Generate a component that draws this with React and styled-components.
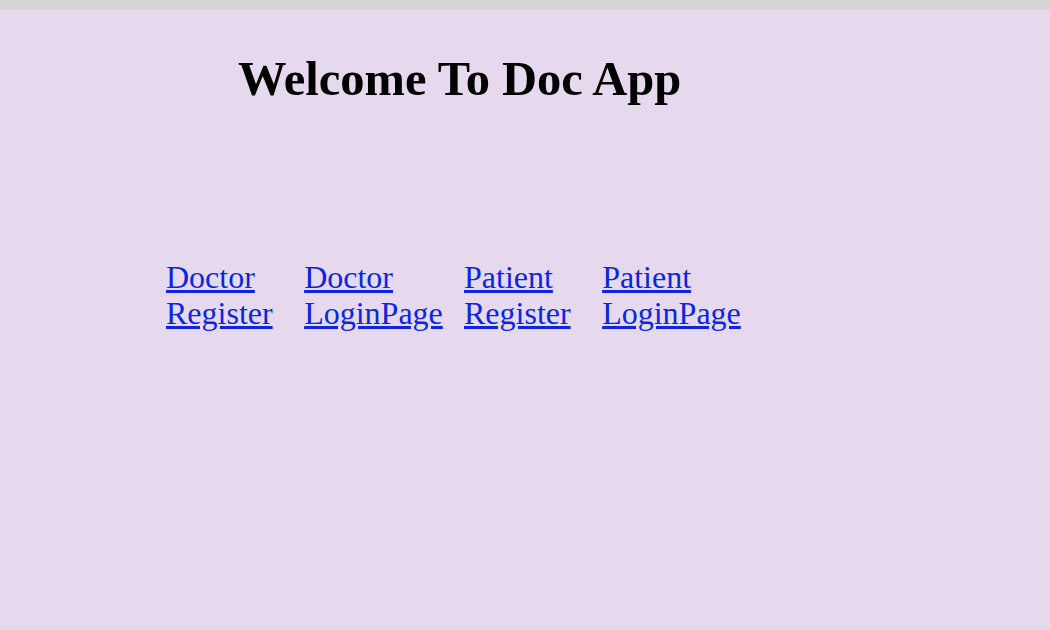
import React from "react";
import styled, { createGlobalStyle } from "styled-components";

const GlobalStyle = createGlobalStyle`
  html, body {
    margin: 0;
    padding: 0;
    background: #e6d9ee;
  }
`;

const TopBar = styled.div`
  height: 10px;
  background: #d6d6d6;
`;

const Page = styled.div`
  min-height: 620px;
  background: #e6d9ee;
  font-family: "Liberation Serif", "Times New Roman", serif;
  overflow: hidden;
`;

const Title = styled.h1`
  margin: 41px 0 0 238px;
  font-size: 48.5px;
  font-weight: bold;
  color: #000;
`;

const LinkRow = styled.nav`
  display: flex;
  width: 596px;
  margin: 153px 0 0 166px;
`;

const LinkEl = styled.a`
  flex: 1 1 auto;
  font-size: 32px;
  line-height: 36px;
  color: #0a26e2;
  text-decoration: underline;
`;

const links = [
  "Doctor Register",
  "Doctor LoginPage",
  "Patient Register",
  "Patient LoginPage",
];

export default function App() {
  return (
    <>
      <GlobalStyle />
      <TopBar />
      <Page>
        <Title>Welcome To Doc App</Title>
        <LinkRow>
          {links.map((label) => (
            <LinkEl key={label} href="#">
              {label}
            </LinkEl>
          ))}
        </LinkRow>
      </Page>
    </>
  );
}
